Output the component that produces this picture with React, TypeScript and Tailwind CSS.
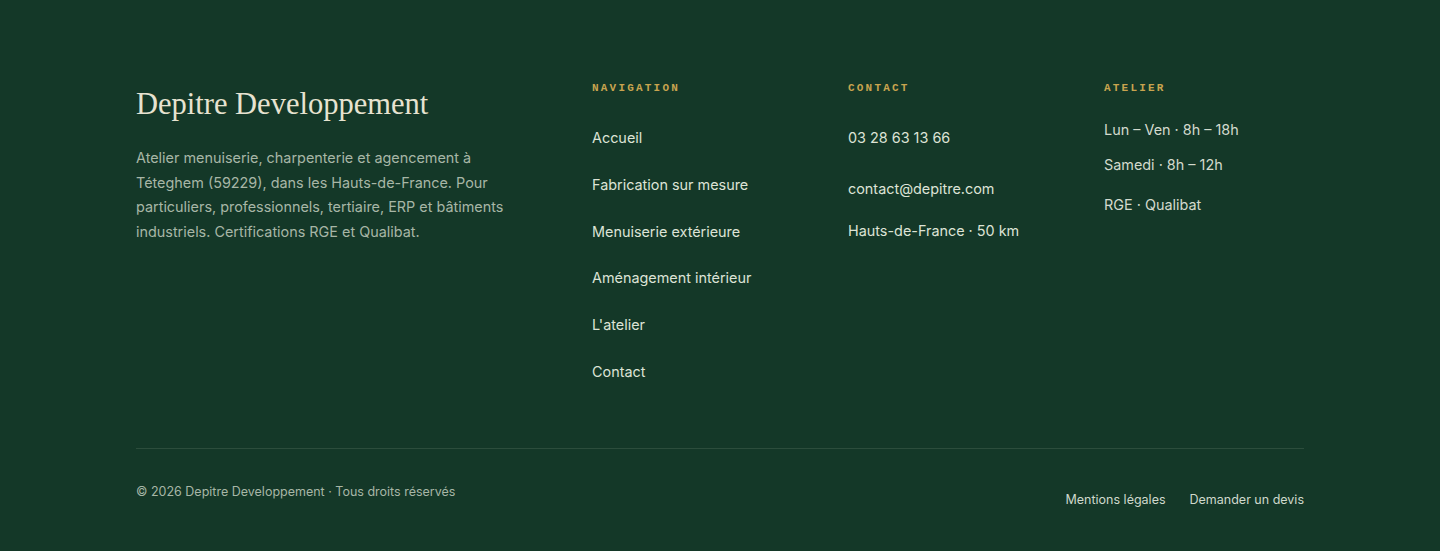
import React from 'react';

const navLinks = [
  'Accueil',
  'Fabrication sur mesure',
  'Menuiserie extérieure',
  'Aménagement intérieur',
  "L'atelier",
  'Contact',
];

const Label: React.FC<{ children: React.ReactNode }> = ({ children }) => (
  <h4 className="font-['Liberation_Mono',monospace] text-[11px] font-bold leading-4 tracking-[0.2em] text-[#c9a44f] uppercase">
    {children}
  </h4>
);

const App: React.FC = () => {
  return (
    <footer className="min-h-[551px] bg-[#143828] font-['Inter',sans-serif]">
      <div className="mx-auto w-[1168px] pt-[80px] pb-[44px]">
        <div className="grid grid-cols-[2fr_1fr_1fr_1fr] gap-14">
          {/* Brand */}
          <div>
            <h2 className="font-['Liberation_Serif',serif] text-[30.5px] leading-9 text-[#e7e3d0] mt-[6px]">
              Depitre Developpement
            </h2>
            <p className="mt-[24px] max-w-sm text-[14.4px] leading-[24.5px] text-[#a7b6a6]">
              Atelier menuiserie, charpenterie et agencement à Téteghem (59229), dans les Hauts-de-France. Pour
              particuliers, professionnels, tertiaire, ERP et bâtiments industriels. Certifications RGE et Qualibat.
            </p>
          </div>

          {/* Navigation */}
          <div>
            <Label>Navigation</Label>
            <ul className="mt-[30px] flex flex-col gap-[23.8px]">
              {navLinks.map((l) => (
                <li key={l} className="leading-[23px]">
                  <a href="#" className="text-[14.4px] leading-[23px] text-[#dde3d6]">
                    {l}
                  </a>
                </li>
              ))}
            </ul>
          </div>

          {/* Contact */}
          <div>
            <Label>Contact</Label>
            <div className="mt-[30px] flex flex-col text-[14.4px] leading-[23px] text-[#dde3d6]">
              <a href="#">03 28 63 13 66</a>
              <a href="#" className="mt-[28px]">contact@depitre.com</a>
              <span className="mt-[19px]">Hauts-de-France · 50 km</span>
            </div>
          </div>

          {/* Atelier */}
          <div>
            <Label>Atelier</Label>
            <div className="mt-[22px] flex flex-col text-[14.4px] leading-[23px] text-[#d3dacd]">
              <span>Lun – Ven · 8h – 18h</span>
              <span className="mt-[12px]">Samedi · 8h – 12h</span>
              <span className="mt-[17px]">RGE · Qualibat</span>
            </div>
          </div>
        </div>

        <div className="mt-[65px] border-t border-[#2c4d3c]" />

        <div className="mt-[33px] flex items-start justify-between text-[12.5px] leading-5">
          <p className="text-[#a7b6a6]">© 2026 Depitre Developpement · Tous droits réservés</p>
          <div className="mt-[8px] flex gap-6 text-[#cfd8cc]">
            <a href="#">Mentions légales</a>
            <a href="#">Demander un devis</a>
          </div>
        </div>
      </div>
    </footer>
  );
};

export default App;
